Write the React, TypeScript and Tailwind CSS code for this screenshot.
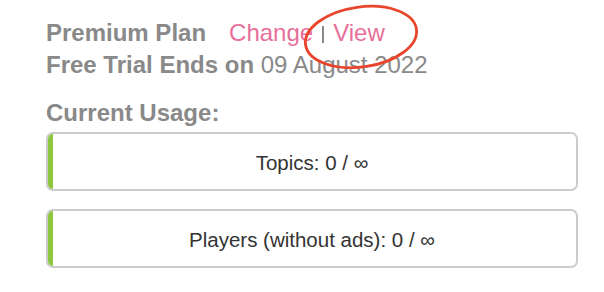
const usage = [
  { label: 'Topics', used: 0 },
  { label: 'Players (without ads)', used: 0 },
];

const UsageBar = ({ label, used }: { label: string; used: number }) => (
  <div className="relative flex h-[59px] items-center justify-center overflow-hidden rounded-[7px] border-2 border-[#cccccc] bg-white pt-[3px]">
    <div className="absolute inset-y-0 left-0 w-[5px] bg-[#8dc63f]" />
    <span className="text-[20.5px] text-[#333333]">
      {label}: {used} / ∞
    </span>
  </div>
);

const App = () => {
  return (
    <div
      className="relative h-[292px] w-[604px] overflow-hidden bg-white pl-[46px] pr-[26px] pt-[17px]"
      style={{ fontFamily: '"Liberation Sans", Arial, Helvetica, sans-serif' }}
    >
      {/* Plan */}
      <div className="flex items-baseline text-[24px] leading-[32px]">
        <span className="font-bold text-[#898989]">Premium Plan</span>
        <span className="ml-[23px] text-[#e86f9b]">Change</span>
        <span className="mx-[9px] inline-block h-[17px] w-[2px] self-center translate-y-[1px] bg-[#8a8a8a]" />
        <span className="text-[#e86f9b]">View</span>
      </div>
      <div className="text-[24px] leading-[32px] text-[#898989]">
        <span className="font-bold">Free Trial Ends on</span> 09 August 2022
      </div>

      {/* Usage */}
      <div className="mt-[16px] text-[24px] font-bold leading-[32px] text-[#898989]">
        Current Usage:
      </div>
      <div className="mt-[3px] flex flex-col gap-[18px]">
        {usage.map((u) => (
          <UsageBar key={u.label} label={u.label} used={u.used} />
        ))}
      </div>

      {/* annotation circle */}
      <svg className="pointer-events-none absolute left-0 top-0" width="604" height="292">
        <ellipse
          cx="361"
          cy="37"
          rx="56"
          ry="30"
          transform="rotate(-8 361 37)"
          fill="none"
          stroke="#e9452c"
          strokeWidth="2.8"
        />
      </svg>
    </div>
  );
};

export default App;
